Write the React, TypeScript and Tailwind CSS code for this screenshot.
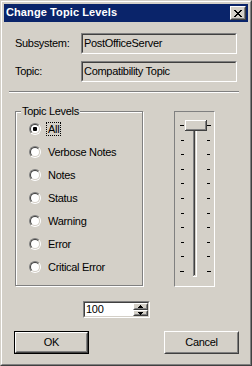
import React from "react";

function Sunken({ className = "", innerClass = "", children }: { className?: string; innerClass?: string; children?: React.ReactNode }) {
  return (
    <div className={`border border-t-[#808080] border-l-[#808080] border-b-white border-r-white ${className}`}>
      <div className={`h-full w-full border border-t-[#404040] border-l-[#404040] border-b-[#d4d0c8] border-r-[#d4d0c8] ${innerClass}`}>
        {children}
      </div>
    </div>
  );
}

function Raised({ className = "", innerClass = "", children }: { className?: string; innerClass?: string; children?: React.ReactNode }) {
  return (
    <div className={`border border-t-white border-l-white border-b-[#404040] border-r-[#404040] bg-[#d4d0c8] ${className}`}>
      <div className={`h-full w-full border border-t-[#d4d0c8] border-l-[#d4d0c8] border-b-[#808080] border-r-[#808080] ${innerClass}`}>
        {children}
      </div>
    </div>
  );
}

function Radio({ label, checked = false, focused = false }: { label: string; checked?: boolean; focused?: boolean }) {
  return (
    <div className="h-[23px] flex items-center">
      <span className="w-[12px] h-[12px] rounded-full border border-t-[#808080] border-l-[#808080] border-b-white border-r-white flex">
        <span className="w-full h-full rounded-full border border-t-[#404040] border-l-[#404040] border-b-[#d4d0c8] border-r-[#d4d0c8] bg-white flex items-center justify-center">
          {checked && <span className="w-[4px] h-[4px] bg-black rounded-[1px]" />}
        </span>
      </span>
      <span
        className={`ml-[5px] px-[1px] leading-[12px] border border-dotted ${focused ? "border-black" : "border-transparent"}`}
      >
        {label}
      </span>
    </div>
  );
}

function Trackbar() {
  const ticks: number[] = [];
  for (let i = 0; i <= 10; i++) ticks.push(Math.round(13 + 14.6 * i));
  return (
    <svg width="39" height="174" viewBox="0 0 39 174" shapeRendering="crispEdges">
      {ticks.map((y, i) => {
        const edge = i === 0 || i === 10;
        return (
          <g key={i}>
            <rect x={edge ? 5 : 6} y={y} width={edge ? 4 : 3} height={1} fill="#000" />
            <rect x={32} y={y} width={edge ? 4 : 3} height={1} fill="#000" />
          </g>
        );
      })}
      {/* channel */}
      <rect x={18} y={11} width={4} height={154} fill="#fff" />
      <rect x={18} y={11} width={3} height={153} fill="#d4d0c8" />
      <rect x={18} y={11} width={1} height={153} fill="#808080" />
      <rect x={19} y={11} width={1} height={152} fill="#404040" />
      <rect x={18} y={11} width={3} height={1} fill="#808080" />
      {/* thumb */}
      <rect x={10} y={8} width={22} height={11} fill="#404040" />
      <rect x={10} y={8} width={21} height={10} fill="#fff" />
      <rect x={11} y={9} width={20} height={9} fill="#808080" />
      <rect x={11} y={9} width={19} height={8} fill="#d4d0c8" />
    </svg>
  );
}

export default function App() {
  return (
    <div className="w-[252px] h-[366px] border border-t-[#d4d0c8] border-l-[#d4d0c8] border-b-[#404040] border-r-[#404040] font-['Liberation_Sans',Arial,sans-serif] text-[11px] text-black tracking-[-0.3px]">
      <div className="h-full border border-t-white border-l-white border-b-[#808080] border-r-[#808080] bg-[#d4d0c8] p-[2px] flex flex-col">
        {/* Title bar */}
        <div className="h-[18px] shrink-0 bg-[#0a246a] flex items-center justify-between pl-[2px] pr-[2px]">
          <span className="text-white font-bold text-[11px] leading-none tracking-[0.1px] -mt-[2px]">Change Topic Levels</span>
          <Raised className="w-[16px] h-[14px]" innerClass="flex items-center justify-center">
            <svg width="8" height="7" viewBox="0 0 8 7" shapeRendering="crispEdges">
              <path d="M0 0h2v1h-2zM6 0h2v1h-2zM1 1h2v1h-2zM5 1h2v1h-2zM2 2h4v1h-4zM3 3h2v1h-2zM2 4h4v1h-4zM1 5h2v1h-2zM5 5h2v1h-2zM0 6h2v1h-2zM6 6h2v1h-2z" fill="#000" />
            </svg>
          </Raised>
        </div>

        {/* Body */}
        <div className="flex-1 flex flex-col">
          <div className="mt-[11px] ml-[11px] flex items-center">
            <span className="w-[66px]">Subsystem:</span>
            <Sunken className="w-[156px] h-[21px]" innerClass="flex items-center pl-[1px]">
              PostOfficeServer
            </Sunken>
          </div>
          <div className="mt-[7px] ml-[11px] flex items-center">
            <span className="w-[66px]">Topic:</span>
            <Sunken className="w-[156px] h-[21px]" innerClass="flex items-center pl-[1px]">
              Compatibility Topic
            </Sunken>
          </div>

          <div className="mt-[9px] ml-[5px] w-[230px] h-[2px] border-t border-t-[#808080] border-b border-b-white" />

          <div className="mt-[18px] ml-[11px] flex items-start">
            <div className="relative w-[128px] h-[175px] border border-[#808080] shadow-[1px_1px_0_#fff,inset_1px_1px_0_#fff]">
              <span className="absolute left-[5px] top-[-7px] bg-[#d4d0c8] px-[1px] leading-[13px]">Topic Levels</span>
              <div className="flex flex-col pt-[5px] pl-[13px]">
                <Radio label="All" checked focused />
                <Radio label="Verbose Notes" />
                <Radio label="Notes" />
                <Radio label="Status" />
                <Radio label="Warning" />
                <Radio label="Error" />
                <Radio label="Critical Error" />
              </div>
            </div>
            <div className="ml-[31px] w-[41px] h-[176px] border border-t-[#808080] border-l-[#808080] border-b-white border-r-white">
              <Trackbar />
            </div>
          </div>

          <div className="mt-[14px] ml-[79px] flex">
            <Sunken className="w-[67px] h-[17px]" innerClass="flex bg-white">
              <span className="flex-1 flex items-center pl-[1px] leading-none">100</span>
              <div className="w-[15px] flex flex-col">
                <Raised className="h-[7px] w-full" innerClass="flex items-center justify-center">
                  <svg width="5" height="3" viewBox="0 0 5 3" shapeRendering="crispEdges">
                    <path d="M2 0h1v1h-1zM1 1h3v1h-3zM0 2h5v1h-5z" fill="#000" />
                  </svg>
                </Raised>
                <Raised className="h-[6px] w-full" innerClass="flex items-center justify-center">
                  <svg width="5" height="3" viewBox="0 0 5 3" shapeRendering="crispEdges">
                    <path d="M0 0h5v1h-5zM1 1h3v1h-3zM2 2h1v1h-1z" fill="#000" />
                  </svg>
                </Raised>
              </div>
            </Sunken>
          </div>

          <div className="mt-[13px] ml-[10px] flex">
            <div className="w-[75px] h-[23px] border border-black">
              <Raised className="w-full h-full" innerClass="flex items-center justify-center">
                OK
              </Raised>
            </div>
            <Raised className="ml-[75px] w-[75px] h-[23px]" innerClass="flex items-center justify-center">
              Cancel
            </Raised>
          </div>
        </div>
      </div>
    </div>
  );
}
